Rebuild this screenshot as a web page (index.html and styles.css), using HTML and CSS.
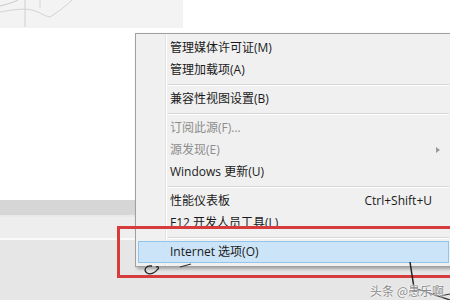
FILE: index.html
```html
<!DOCTYPE html>
<html lang="zh-CN">
<head>
    <meta charset="UTF-8">
    <meta name="viewport" content="width=device-width, initial-scale=1.0">
    <title>Internet 选项</title>
    <link rel="stylesheet" href="styles.css">
</head>
<body>
    <div class="page">
        <div class="topbar">
            <div class="sketch">
                <svg width="183" height="28" viewBox="0 0 183 28">
                    <path d="M0 6 C8 4 14 2 18 0" stroke="#c8c8c8" fill="none"/>
                    <path d="M25 0 L25 27" stroke="#cfcfcf" fill="none"/>
                    <path d="M40 0 L40 8" stroke="#d6d6d6" fill="none"/>
                    <path d="M0 12 C12 10 22 8 32 10 C40 12 44 16 50 17 C58 12 66 6 72 0" stroke="#d2d2d2" fill="none"/>
                </svg>
            </div>
        </div>
        <div class="content"></div>
        <div class="hbar"></div>
        <div class="strip"></div>
        <div class="floor"></div>

        <!-- tools context menu -->
        <div class="menu">
            <div class="item">管理媒体许可证(M)</div>
            <div class="item">管理加载项(A)</div>
            <div class="sep"></div>
            <div class="item">兼容性视图设置(B)</div>
            <div class="sep"></div>
            <div class="item disabled">订阅此源(F)...</div>
            <div class="item disabled">源发现(E)<span class="arrow"></span></div>
            <div class="item">Windows 更新(U)</div>
            <div class="sep"></div>
            <div class="item">性能仪表板<span class="shortcut">Ctrl+Shift+U</span></div>
            <div class="item">F12 开发人员工具(L)</div>
            <div class="sep"></div>
            <div class="item active">Internet 选项(O)</div>
        </div>

        <div class="redbox"></div>

        <svg class="marks" width="450" height="60" viewBox="0 240 450 60">
            <path d="M152 266 C146 265 143 270 147 273 C150 275 155 273 157 270 C160 268 158 266 156 267" stroke="#222" stroke-width="1.3" fill="none"/>
            <path d="M180 267 L191 264" stroke="#333" stroke-width="1.2" fill="none"/>
            <path d="M410 262 L414 288" stroke="#222" stroke-width="1.5" fill="none"/>
            <path d="M414 288 L450 300" stroke="#333" stroke-width="1.3" fill="none"/>
            <path d="M440 296 L450 294" stroke="#333" stroke-width="1" fill="none"/>
        </svg>

        <div class="watermark">头条 @愚乐啊</div>
    </div>
</body>
</html>
```

FILE: styles.css
```css
/* Page */
body {
    margin: 0;
    font-family: "Open Sans", "Noto Sans CJK SC", sans-serif;
    background-color: #fff;
}
.page {
    position: relative;
    width: 450px;
    height: 300px;
    overflow: hidden;
    display: flex;
    flex-direction: column;
}
.topbar {
    height: 28px;
    display: flex;
    background-color: #fff;
}
.sketch {
    width: 183px;
    height: 28px;
    background-color: #f3f3f3;
}
.sketch svg {
    display: block;
}
.content {
    height: 172px;
    background-color: #fff;
}
.hbar {
    height: 15px;
    background-color: #d6d6d6;
    border-bottom: 2px solid #e9e9e9;
}
.strip {
    height: 21px;
    background-color: #eeeeee;
    border-bottom: 2px solid #fafafa;
}
.floor {
    flex: 1;
    background-color: #e6e6e6;
}

/* Context menu */
.menu {
    position: absolute;
    left: 135px;
    top: 33px;
    width: 311px;
    padding: 3px 2px 3px 2px;
    background-color: #f0f0f0;
    border: 1px solid #a0a0a0;
    box-shadow: 2px 2px 3px rgba(0, 0, 0, 0.3);
    background-image: linear-gradient(to right, transparent 29px, #e2e2e2 29px, #e2e2e2 30px, #fff 30px, #fff 31px, transparent 31px);
    font-size: 12px;
    color: #1a1a1a;
}
.item {
    position: relative;
    height: 22px;
    line-height: 22px;
    padding-left: 32px;
    box-sizing: border-box;
    white-space: nowrap;
}
.item.disabled {
    color: #8d8d8d;
}
.item.active {
    background-color: #cce4f7;
    border: 1px solid #93c4ea;
    line-height: 20px;
    padding-left: 31px;
}
.shortcut {
    position: absolute;
    right: 17px;
    top: 0;
}
.arrow {
    position: absolute;
    right: 9px;
    top: 8px;
    width: 0;
    height: 0;
    border-top: 3px solid transparent;
    border-bottom: 3px solid transparent;
    border-left: 4px solid #9a9a9a;
}
.sep {
    height: 7px;
    margin-left: 30px;
    background-image: linear-gradient(to bottom, transparent 3px, #d7d7d7 3px, #d7d7d7 4px, #fff 4px, #fff 5px, transparent 5px);
}

/* Annotation overlay */
.redbox {
    position: absolute;
    left: 117px;
    top: 226px;
    width: 345px;
    height: 46px;
    border: 3px solid #d63c3c;
}
.marks {
    position: absolute;
    left: 0;
    top: 240px;
}
.watermark {
    position: absolute;
    left: 370px;
    top: 283px;
    font-family: "Noto Sans CJK SC", sans-serif;
    font-size: 12px;
    line-height: 15px;
    color: #8a8a8a;
    text-shadow: 0 0 2px #fff, 0 0 2px #fff;
    white-space: nowrap;
}
```
